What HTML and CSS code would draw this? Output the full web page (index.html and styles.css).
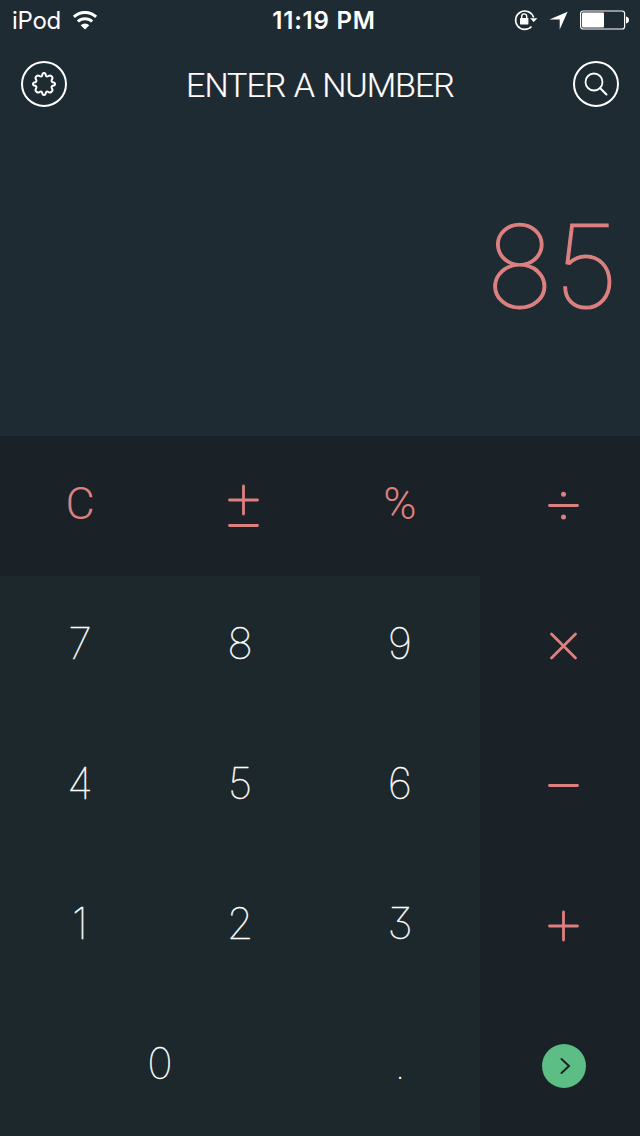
FILE: index.html
```
<!DOCTYPE html>
<html lang="en">
<head>
<meta charset="utf-8">
<title>Enter a number</title>
<link rel="stylesheet" href="styles.css">
</head>
<body>
<main class="app">
  <div class="status">
    <div class="status-left">
      <span class="carrier">iPod</span>
      <svg class="wifi" width="26" height="20" viewBox="0 0 26 20">
        <path d="M1.900 5.900a16 16 0 0 1 22.200 0" fill="none" stroke="#fff" stroke-width="3"/>
        <path d="M5.900 10.500a10.300 10.300 0 0 1 14.200 0" fill="none" stroke="#fff" stroke-width="3"/>
        <path d="M13 18.600l-4.300-4.400a6.200 6.200 0 0 1 8.600 0z" fill="#fff"/>
      </svg>
    </div>
    <span class="time">11:19 PM</span>
    <div class="status-right">
      <svg class="lock" width="24" height="22" viewBox="0 0 24 22">
        <path d="M17.500 17.500A9.200 9.200 0 1 1 19.600 8.500" fill="none" stroke="#fff" stroke-width="1.600"/>
        <path d="M16 9.300h7.400L19.700 13z" fill="#fff"/>
        <rect x="6" y="9" width="8.400" height="6.400" rx=".6" fill="#fff"/>
        <path d="M7.700 9.500V7.400a2.500 2.500 0 0 1 5 0V9.500" fill="none" stroke="#fff" stroke-width="1.400"/>
      </svg>
      <svg class="arrow" width="19" height="19" viewBox="0 0 19 19"><path d="M18.600 .8L10.700 18.600V8.500H.5z" fill="#fff"/></svg>
      <svg class="battery" width="50" height="20" viewBox="0 0 50 20">
        <rect x=".6" y="1" width="44" height="18" rx="2.500" fill="none" stroke="#fff" stroke-width="1.200"/>
        <rect x="2" y="2.500" width="22" height="15" rx="1" fill="#fff"/>
        <path d="M46 6.500c2 .5 3 1.800 3 3.500S48 13 46 13.500z" fill="#fff"/>
      </svg>
    </div>
  </div>
  <header class="header">
    <button class="round" aria-label="Settings">
      <svg width="46" height="46" viewBox="0 0 46 46" fill="none" stroke="#fff" stroke-width="2">
        <circle cx="23" cy="23" r="22"/>
        <path class="gear" d="M21.200 14.200Q21.500 12 23 12T24.800 14.200Q25.300 16 27.200 15.200Q29.500 13.700 30.600 15.400Q32.300 16.500 30.800 18.800Q30 20.700 31.800 21.200Q34 21.500 34 23T31.800 24.800Q30 25.300 30.800 27.200Q32.300 29.500 30.600 30.600Q29.500 32.300 27.200 30.800Q25.300 30 24.800 31.800Q24.500 34 23 34T21.200 31.800Q20.700 30 18.800 30.800Q16.500 32.300 15.400 30.600Q13.700 29.500 15.200 27.200Q16 25.300 14.200 24.800Q12 24.500 12 23T14.200 21.200Q16 20.700 15.200 18.800Q13.700 16.500 15.400 15.400Q16.500 13.700 18.800 15.200Q20.700 16 21.200 14.200Z"/>
      </svg>
    </button>
    <h1 class="title">ENTER A NUMBER</h1>
    <button class="round" aria-label="Search">
      <svg width="46" height="46" viewBox="0 0 46 46" fill="none" stroke="#fff" stroke-width="2">
        <circle cx="23" cy="23" r="22"/>
        <circle cx="21" cy="21" r="8.500" stroke-width="1.800"/>
        <path d="M27.200 27.200l6.300 6.300" stroke-linecap="round"/>
      </svg>
    </button>
  </header>
  <output class="display">85</output>
  <section class="pad">
    <button class="key op letter">C</button>
    <button class="key op"><svg width="34" height="46" viewBox="0 0 34 46"><path d="M2.500 17h28M16.500 3v28M2.500 42.500h28"/></svg></button>
    <button class="key op letter">%</button>
    <button class="key op"><svg width="34" height="34" viewBox="0 0 34 34"><path d="M2.500 16.500h28"/><circle cx="16.500" cy="5.300" r="2.500"/><circle cx="16.500" cy="28" r="2.500"/></svg></button>
    <button class="key">7</button><button class="key">8</button><button class="key">9</button>
    <button class="key op"><svg width="34" height="34" viewBox="0 0 34 34"><path d="M4.500 5l24 24M28.500 5l-24 24"/></svg></button>
    <button class="key">4</button><button class="key">5</button><button class="key">6</button>
    <button class="key op"><svg width="34" height="34" viewBox="0 0 34 34"><path d="M2.500 16.500h28"/></svg></button>
    <button class="key">1</button><button class="key">2</button><button class="key">3</button>
    <button class="key op"><svg width="34" height="34" viewBox="0 0 34 34"><path d="M2.500 17h28M16.500 3v28"/></svg></button>
    <button class="key wide">0</button><button class="key point">.</button>
    <button class="key op" aria-label="Continue"><span class="go"><svg width="44" height="44" viewBox="0 0 44 44"><path d="M19.500 15l7.500 7-7.500 7"/></svg></span></button>
  </section>
</main>
</body>
</html>
```
FILE: styles.css
```
* { box-sizing: border-box; }
body { margin: 0; background: #1f2b33; }
button { padding: 0; border: 0; background: none; color: inherit; font: inherit; }
svg { display: block; }
.app { width: 640px; height: 1136px; display: flex; flex-direction: column; color: #fff; font-family: Inter, sans-serif; overflow: hidden; }
.status { height: 40px; display: grid; grid-template-columns: 1fr auto 1fr; align-items: center; padding: 1px 10px 0 12px; font-size: 24px; line-height: 40px; }
.status-left, .status-right { display: flex; align-items: center; }
.status-left { gap: 11px; }
.carrier { font-size: 24px; letter-spacing: -.3px; }
.time { font-weight: 600; letter-spacing: .8px; padding-left: 6px; }
.status-right { justify-content: flex-end; padding-bottom: 2px; }
.arrow { margin: 0 12px 0 11px; }
.header { height: 88px; display: flex; align-items: center; justify-content: space-between; padding: 0 21px; }
.title { margin: 2px 0 0; font-family: Roboto, sans-serif; font-size: 34px; font-weight: 300; line-height: 44px; letter-spacing: -1px; word-spacing: 1px; -webkit-text-stroke: .2px #fff; }
.display { height: 308px; padding-right: 21px; text-align: right; font-size: 115px; font-weight: 100; line-height: 277px; color: #dc8080; -webkit-text-stroke: 1.2px #dc8080; }
.pad { display: grid; grid-template-columns: repeat(4, 160px); grid-auto-rows: 140px; background: #1d282d; }
.key { display: flex; align-items: center; justify-content: center; font-size: 43px; font-weight: 100; line-height: 52px; padding-bottom: 6px; font-feature-settings: "cv09"; -webkit-text-stroke: .45px currentColor; }
.wide { grid-column: span 2; }
.point { -webkit-text-stroke: 0; }
.op { background: #1a2127; color: #dc8080; padding: 0 0 0 7px; }
.letter { font-family: Roboto, sans-serif; font-size: 45px; font-weight: 300; padding: 0 0 4px; -webkit-text-stroke: 0; }
.op svg { fill: none; stroke: #dc8080; stroke-width: 2.800; stroke-linecap: round; }
.op circle { fill: #dc8080; stroke: none; }
.go { width: 44px; height: 44px; border-radius: 50%; background: #5cbd85; margin-left: 1px; }
.op .go svg { stroke: #1a2127; stroke-width: 2; }
```
